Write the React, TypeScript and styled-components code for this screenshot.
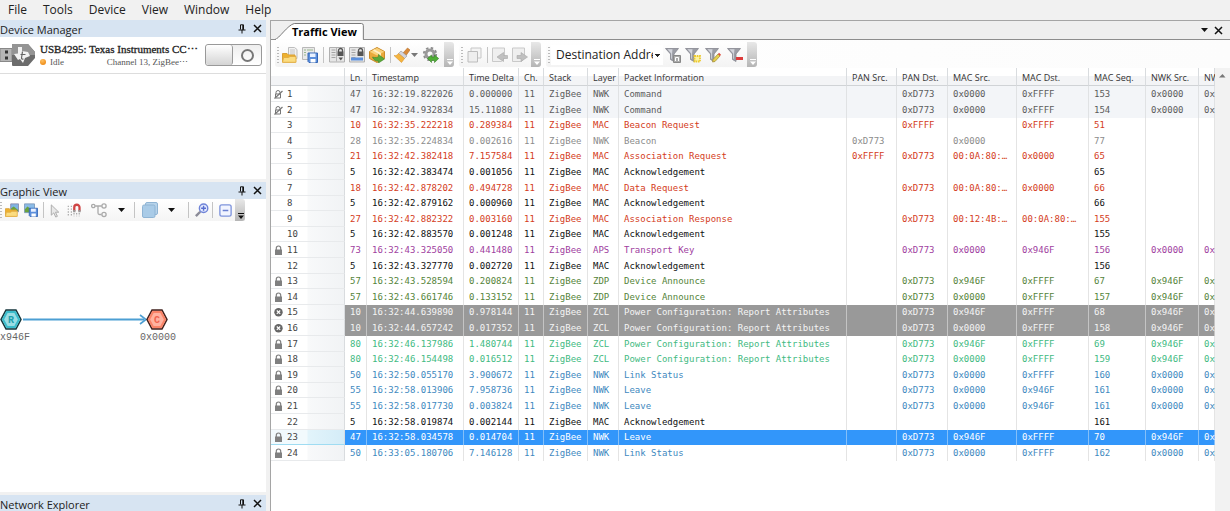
import React from 'react';
import styled, { createGlobalStyle, css } from 'styled-components';

const ui = `"Open Sans", "Noto Sans", sans-serif`;
const mono = `"DejaVu Sans Mono", monospace`;
const serif = `"Liberation Serif", serif`;

const Global = createGlobalStyle`
  * { box-sizing: border-box; }
  html, body, #root { height: 100%; }
  body { margin: 0; background: #f1f1f1; font-family: ${ui}; color: #222; }
  button { border: 0; padding: 0; background: none; font: inherit; color: inherit; }
`;

const Window = styled.div`
  display: flex;
  flex-direction: column;
  height: 100vh;
  min-height: 480px;
  overflow: hidden;
`;

const MenuBar = styled.nav`
  display: flex;
  flex: none;
  gap: 16px;
  height: 20px;
  padding-left: 8px;
`;

const MenuButton = styled.button`
  font-size: 12px;
  line-height: 18px;
`;

const Workspace = styled.div`
  display: flex;
  flex: 1;
  min-height: 0;
`;

const Sidebar = styled.aside`
  display: flex;
  flex: none;
  flex-direction: column;
  gap: 3px;
  width: 270px;
  padding-right: 4px;
`;

const Pane = styled.section<{ $grow?: string }>`
  display: flex;
  flex: ${(p) => p.$grow ?? 'none'};
  flex-direction: column;
  min-height: 0;
  overflow: hidden;
  background: #fff;
`;

const PaneHeader = styled.header`
  display: flex;
  flex: none;
  align-items: center;
  gap: 6px;
  height: 17px;
  padding-right: 3px;
  background: #d7e4f2;
`;

const PaneTitle = styled.h2`
  flex: 1;
  margin: 0;
  padding-top: 2px;
  font-size: 11px;
  font-weight: 400;
  line-height: 15px;
`;

const IconButton = styled.button<{ $w?: number }>`
  display: flex;
  flex: none;
  align-items: center;
  justify-content: center;
  width: ${(p) => p.$w ?? 16}px;
  height: 100%;
`;

const DeviceRow = styled.div`
  display: flex;
  align-items: center;
  gap: 5px;
  height: 37px;
  padding-right: 4px;
  border-bottom: 1px solid #ddd;
  font-family: ${serif};
`;

const DeviceText = styled.div`
  flex: 1;
  min-width: 0;
`;

const DeviceName = styled.div`
  font-size: 11px;
  line-height: 14px;
  white-space: nowrap;
  color: #222;
  -webkit-text-stroke: 0.3px #222;
`;

const DeviceStatus = styled.div`
  display: flex;
  align-items: center;
  gap: 4px;
  padding-right: 12px;
  font-size: 9px;
  line-height: 13px;
  color: #555;
  span { flex: 1; }
`;

const Dot = styled.i`
  width: 6px;
  height: 6px;
  border-radius: 50%;
  background: radial-gradient(circle at 40% 30%, #ffc060, #e87a00);
`;

const Toggle = styled.button`
  display: flex;
  flex: none;
  align-items: stretch;
  width: 57px;
  height: 22px;
  border: 1px solid #999;
  border-radius: 3px;
  background: linear-gradient(#eee, #fff);
`;

const ToggleKnob = styled.span`
  width: 27px;
  border-right: 1px solid #999;
  border-radius: 3px;
  background: linear-gradient(#fff, #d4d4d4);
`;

const ToggleMark = styled.span`
  width: 13px;
  height: 13px;
  margin: auto;
  border: 2px solid #777;
  border-radius: 50%;
`;

const GraphToolbar = styled.div`
  display: flex;
  flex: none;
  align-items: center;
  width: 245px;
  height: 22px;
  background: linear-gradient(#fff, #f4f4f4);
`;

const Separator = styled.i<{ $m?: number }>`
  flex: none;
  width: 1px;
  height: 16px;
  margin: 0 ${(p) => p.$m ?? 3}px;
  background: #c4c4c4;
`;

const Canvas = styled.div`
  position: relative;
  flex: 1;
`;

const GraphDrawing = styled.svg`
  position: absolute;
  left: 0;
  top: 82px;
`;

const Main = styled.main`
  display: flex;
  flex: 1;
  flex-direction: column;
  min-width: 0;
  border-top: 1px solid #a5a5a5;
  border-left: 1px solid #a5a5a5;
  background: #fff;
`;

const TabStrip = styled.div`
  display: flex;
  flex: none;
  align-items: flex-end;
  gap: 4px;
  height: 19px;
  padding-right: 6px;
  border-bottom: 1px solid #8d8d8d;
  background: #efefef;
`;

const Tab = styled.button`
  position: relative;
  height: 17px;
  margin: 0 auto -1px 4px;
  padding: 0 7px 0 17px;
  font-size: 11px;
  font-weight: 700;
  line-height: 16px;
  color: #000;
  svg { position: absolute; inset: 0; width: 100%; height: 100%; }
  span { position: relative; }
`;

const Toolbars = styled.div`
  display: flex;
  flex: none;
  gap: 5px;
  height: 28px;
  padding: 2px 0 1px 4px;
  background: linear-gradient(90deg, #fff, #fcfcfc);
`;

const ToolGroup = styled.div`
  display: flex;
  align-items: center;
  height: 25px;
  border-radius: 3px;
  background: linear-gradient(#fff, #f3f3f3);
`;

const Grip = styled.i<{ $flush?: boolean }>`
  flex: none;
  width: 2px;
  height: 16px;
  margin: 0 1px 0 ${(p) => (p.$flush ? 0 : 2)}px;
  background: repeating-linear-gradient(#bbb 0 1px, transparent 1px 3px);
`;

const Overflow = styled.button`
  display: flex;
  flex: none;
  align-items: flex-end;
  justify-content: center;
  width: 10px;
  height: 100%;
  padding-bottom: 2px;
  border-radius: 0 3px 3px 0;
  background: linear-gradient(#e8e8e8, #b5b5b5);
`;

const FieldSelect = styled.select`
  width: 112px;
  height: 20px;
  padding: 0 10px 0 5px;
  border: 0;
  appearance: none;
  overflow: hidden;
  font: 12px/20px ${ui};
  color: #222;
  background: linear-gradient(#222, #222) 104px 9px / 5px 1px no-repeat,
    linear-gradient(#222, #222) 105px 10px / 3px 1px no-repeat,
    linear-gradient(#222, #222) 106px 11px / 1px 1px no-repeat, #fff;
`;

const TableArea = styled.div`
  display: flex;
  flex: 1;
  min-height: 0;
`;

const TableClip = styled.div`
  flex: 1;
  min-width: 0;
  overflow: hidden;
`;

const ScrollBar = styled.div`
  flex: none;
  width: 15px;
  padding: 5px 4px;
  background: #f2f2f2;
  svg { display: block; }
`;

const Packets = styled.table`
  width: 100%;
  table-layout: fixed;
  border-collapse: separate;
  border-spacing: 0;
`;

const Col = styled.col<{ $w?: number }>`
  width: ${(p) => (p.$w ? `${p.$w}px` : 'auto')};
`;

const Head = styled.th`
  height: 18px;
  padding: 2px 0 0 5px;
  border-right: 1px solid #d9dcdf;
  border-bottom: 1px solid #d0d3d6;
  background: linear-gradient(#fff 50%, #f3f4f6 50%);
  font-size: 9px;
  font-weight: 400;
  line-height: 15px;
  text-align: left;
  white-space: nowrap;
  color: #333;
`;

type Tone = 'plain' | 'red' | 'dim' | 'black' | 'purple' | 'olive' | 'error' | 'green' | 'blue' | 'selected';

const tones: Record<Tone, { fg: string; bg: string; line: string }> = {
  plain: { fg: '#5c5c5c', bg: '#f3f5f8', line: '#e0e2e4' },
  red: { fg: '#d43c22', bg: '#fff', line: '#e4e4e4' },
  dim: { fg: '#8c8c8c', bg: '#fff', line: '#e4e4e4' },
  black: { fg: '#111', bg: '#fff', line: '#e4e4e4' },
  purple: { fg: '#a040a0', bg: '#fff', line: '#e4e4e4' },
  olive: { fg: '#55843a', bg: '#fff', line: '#e4e4e4' },
  error: { fg: '#f4f4f4', bg: '#999', line: '#c4c4c4' },
  green: { fg: '#42ba82', bg: '#fff', line: '#e4e4e4' },
  blue: { fg: '#4189c0', bg: '#fff', line: '#e4e4e4' },
  selected: { fg: '#fff', bg: '#3296fa', line: '#84bff8' },
};

const Row = styled.tr<{ $tone: Tone }>`
  height: 16px;
  &:nth-child(5n + 3), &:nth-child(5n + 5) { height: 15px; }
  td {
    border-right: 1px solid ${(p) => tones[p.$tone].line};
    background: ${(p) => tones[p.$tone].bg};
    color: ${(p) => tones[p.$tone].fg};
  }
`;

const Cell = styled.td`
  padding: 0 0 0 5px;
  font-family: ${mono};
  font-size: 9px;
  line-height: 15px;
  white-space: nowrap;
`;

const RowHead = styled.th<{ $selected: boolean }>`
  padding: 0;
  border-right: 1px solid #d9dcdf;
  border-bottom: 1px solid ${(p) => (p.$selected ? '#9fdcf2' : '#e8eaec')};
  font-family: ${mono};
  font-size: 9px;
  font-weight: 400;
  line-height: 14px;
  text-align: left;
  color: #444;
  background: linear-gradient(90deg, #fff 36px, #f8f9fa 37px, #f1f3f5);
  ${(p) =>
    p.$selected &&
    css`
      background: linear-gradient(90deg, #f2fafd 36px, #e2f4fb 37px, #d4ecf7);
    `}
`;

const RowMark = styled.span`
  display: flex;
  align-items: center;
  gap: 4px;
  padding-left: 3px;
  svg { flex: none; width: 9px; height: 10px; }
`;

const Caret = ({ color = '#111' }: { color?: string }) => (
  <svg width="7" height="4" viewBox="0 0 7 4"><path d="M0 0h7L3.5 4z" fill={color} /></svg>
);

const Pin = () => (
  <svg width="8" height="10" viewBox="0 0 8 10" fill="none" stroke="#111">
    <path d="M2.5 5.500V.8h3v4.700M.5 6h7M4 6v3.500" /><path d="M5 1v5" strokeWidth="1.4" />
  </svg>
);

const Cross = () => (
  <svg width="9" height="9" viewBox="0 0 9 9"><path d="M1 1l7 7M8 1L1 8" stroke="#111" strokeWidth="1.5" /></svg>
);

const OverflowMark = ({ color = '#fff' }: { color?: string }) => (
  <svg width="7" height="6" viewBox="0 0 7 6"><path d="M1 0h6v1H1zM1 2.5h6L4 6z" fill={color} /></svg>
);

type IconName =
  | 'open' | 'save' | 'openImage' | 'saveImage' | 'lockList' | 'lockScreen' | 'box' | 'brush' | 'gear' | 'copy'
  | 'back' | 'forward' | 'funnel' | 'funnelNew' | 'funnelEdit' | 'funnelRemove' | 'pointer' | 'magnet'
  | 'tree' | 'layers' | 'zoom' | 'collapse';

const folder = (
  <>
    <path d="M.5 15V6.500h4.500l1.500 1.500h6.500v7z" fill="#eeb12e" stroke="#d9a136" />
    <path d="M.5 15.300l1-4.800h5l1.500-1h6v5.800z" fill="#fbdc80" stroke="#e3ae45" />
  </>
);
const floppy = (
  <>
    <path d="M6 6h9.500v9.500H7l-1-1z" fill="#5c8fdc" stroke="#3566b4" />
    <path d="M8 6.500h5.500v3.500H8z" fill="#e9f1ff" />
    <path d="M8.500 12h5v3.500h-5z" fill="#fff" />
  </>
);
const funnel = (
  <>
    <path d="M.5 1.500h13L9 7v7.500L5.500 12.500V7z" fill="#9c9ea6" stroke="#85878f" strokeWidth=".8" />
    <path d="M2.500 2.200h5L7 7v5l-.8-.5v-5z" fill="#d4d6dd" />
  </>
);
const listPage = (
  <>
    <path d="M.5 .5h15v14.500H.5z" fill="#e6e6e6" stroke="#b0b0b0" />
    <path d="M2.500 3h4M2.500 5.500h4M2.500 8h4M2.500 10.500h4" stroke="#a4a4a4" />
  </>
);
const padlock = (
  <>
    <path d="M9.500 5V3.500a2 2 0 0 1 4 0V5" fill="none" stroke="#555" strokeWidth="1.300" />
    <path d="M8.500 4.500h6v4.500h-6z" fill="#555" />
  </>
);

const drawings: Record<IconName, React.ReactNode> = {
  open: (<><path d="M6.500 .5h6l2.500 2v9H6.500z" fill="#f2f2f2" stroke="#bdbdbd" /><path d="M8 3h5M8 5h5M8 7h5" stroke="#c4c4c4" />{folder}</>),
  save: (<><path d="M.5 .5h12v12H.5z" fill="#e9e9e9" stroke="#b8b8b8" /><path d="M2 3h2M5 3h6M2 5.500h2M2 8h2" stroke="#9ab890" />{floppy}</>),
  openImage: (<><path d="M6.500 1h9v9h-9z" fill="#7fb4e4" stroke="#88a" /><path d="M7 9.500V6l3-2 5 4v1.500z" fill="#6ba23c" />{folder}</>),
  saveImage: (<><path d="M.5 1h11.500v10H.5z" fill="#8bbce8" stroke="#7d99b8" /><path d="M1 10.500V7l3-3 4 3v3.500z" fill="#6ba23c" />{floppy}</>),
  lockList: (<>{listPage}<path d="M7.500 1v13.500" stroke="#b5b5b5" />{padlock}<path d="M9.500 10.500h4.500l-2.200 3z" fill="#555" /></>),
  lockScreen: (<>{listPage}{padlock}<path d="M2 10.500h12v3H2z" fill="#5d91dd" /></>),
  box: (
    <>
      <path d="M.5 4.500L8 .5l7.500 4v7L8 15.500l-7.500-4z" fill="#e9a93b" stroke="#c98a28" />
      <path d="M.8 4.700L8 1l7.200 3.700L8 8.500z" fill="#f9d27b" />
      <path d="M4.500 3l6.500 3.500v2.500" fill="none" stroke="#fff1c9" strokeWidth="1.800" />
      <path d="M3.500 10c3 1 5 .5 6-.5V7.500l6 4.500-6 4v-2c-2.500 .5-5-1-6-4z" fill="#5aa93a" stroke="#3f8a28" strokeWidth=".6" />
    </>
  ),
  brush: (
    <>
      <path d="M9 6l4.500-5L16 3l-4 5.500z" fill="#d98a3a" stroke="#b46f2a" strokeWidth=".6" />
      <path d="M7 4l6 5-2.500 2.500-6-5z" fill="#d4d4dc" stroke="#999" strokeWidth=".6" />
      <path d="M4.500 6.500l6 5L7.500 15.500 0 8.500c2 .5 3.500-.5 4.500-2z" fill="#f5b53f" stroke="#d9922a" strokeWidth=".6" />
    </>
  ),
  gear: (
    <>
      <circle cx="7" cy="7" r="4" fill="none" stroke="#9a9a9a" strokeWidth="3" />
      <circle cx="7" cy="7" r="6.200" fill="none" stroke="#8d8d8d" strokeWidth="1.800" strokeDasharray="2.500 2.370" />
      <path d="M4.500 11.500L8.500 8v2h3V8l4.200 3.500-4.200 4v-2h-3v2z" fill="#4fae36" stroke="#368024" strokeWidth=".6" />
    </>
  ),
  copy: (<><path d="M5 1h10v10H5z" fill="#f4f4f4" stroke="#c6c6c6" /><path d="M2 4.500h9.500V15H2z" fill="#eee" stroke="#bcbcbc" /></>),
  back: (<><path d="M.5 1h12v10l-3 3.500h-9z" fill="#efefef" stroke="#c9c9c9" /><path d="M15.500 8.500h-4v-3L5 10l6.500 4.500v-3h4z" fill="#c0c0c0" stroke="#a8a8a8" strokeWidth=".6" /></>),
  forward: (<><path d="M.5 1h12v10l-3 3.500h-9z" fill="#efefef" stroke="#c9c9c9" /><path d="M5 8.500h4v-3l6.500 4.500L9 14.500v-3H5z" fill="#c0c0c0" stroke="#a8a8a8" strokeWidth=".6" /></>),
  funnel: (<>{funnel}<path d="M8.500 8.500h7v7h-7z" fill="#aaa" stroke="#888" /><path d="M10.500 14v-3.500h3V14" fill="none" stroke="#fff" /></>),
  funnelNew: (<>{funnel}<path d="M9.500 9h5.500v5.500H9.500z" fill="#fdf3a0" stroke="#ecc92f" strokeWidth="1.800" strokeDasharray="1.600 .7" /></>),
  funnelEdit: (<>{funnel}<path d="M7.500 15l.5-2.500L13 7l2 2-5 5.500z" fill="#e5d050" stroke="#a08a30" strokeWidth=".7" /><path d="M13 7l2 2 1-1.200-2-2z" fill="#e04a3a" /></>),
  funnelRemove: (<>{funnel}<path d="M9 10h7v3H9z" fill="#dd3b3b" /></>),
  pointer: <path d="M3.500 2v11l2.700-2.500 2 4.500 1.800-.8-2-4.400h3.500z" fill="#e8e8e8" stroke="#aaa" />,
  magnet: (
    <>
      <path d="M1.500 3v12M5 3v12M8 11.500V15M11 11.500V15M14 11.500V15" stroke="#aaa" strokeWidth="1.400" strokeDasharray="1.600 1.600" />
      <path d="M8.300 9.500V5a3 3 0 0 1 6 0v4.500" fill="none" stroke="#cf4545" strokeWidth="2.600" />
      <path d="M7 8h2.600v2.500H7zM13 8h2.600v2.500H13z" fill="#999" />
    </>
  ),
  tree: (
    <g fill="none" stroke="#aaa" strokeWidth="1.300">
      <circle cx="2.300" cy="4" r="1.700" /><circle cx="13" cy="4" r="2.100" /><circle cx="13" cy="12.500" r="2.100" />
      <path d="M4.200 4h6.500M7 4v7q0 1.500 1.500 1.500h2" />
    </g>
  ),
  layers: (<><rect x="3.500" y=".5" width="12" height="12" rx="1.500" fill="#b7d3ea" stroke="#8fb4d4" /><rect x=".5" y="3" width="12.500" height="12.500" rx="1.500" fill="#a9cbe7" stroke="#8fb4d4" /></>),
  zoom: (
    <>
      <path d="M1 15L6 10" stroke="#8b8b98" strokeWidth="2.800" />
      <circle cx="9.800" cy="6" r="4.800" fill="#e4ebff" stroke="#7084d8" strokeWidth="1.600" />
      <path d="M7 6h5.600M9.800 3.200v5.600" stroke="#5a6fd0" strokeWidth="1.600" />
    </>
  ),
  collapse: (<><rect x="2" y="2" width="12" height="12" rx="2" fill="#f1f4ff" stroke="#7d93dc" strokeWidth="1.400" /><path d="M5 8h6" stroke="#6a80d0" strokeWidth="1.600" /></>),
};

const Icon = ({ name, size = 16 }: { name: IconName; size?: number }) => (
  <svg width={size} height={size} viewBox="0 0 16 16" fill="none">{drawings[name]}</svg>
);

const Tool = ({ name, label, w = 20, size }: { name: IconName; label: string; w?: number; size?: number }) => (
  <IconButton $w={w} aria-label={label}><Icon name={name} size={size} /></IconButton>
);

const UsbStick = () => (
  <svg width="35" height="24" viewBox="0 0 35 24">
    <path d="M0 5.500h12v13H0z" fill="#b5b5b5" stroke="#888" />
    <path d="M5 7.500h3v3H5zM5 13.500h3v3H5z" fill="#333" />
    <path d="M12 2q0-1 1-1h15l7 8v6l-7 8H13q-1 0-1-1z" fill="#6c6c6c" />
    <path d="M12 2q0-1 1-1h15l7 8v3H12z" fill="#949494" />
    <path d="M18 4h4v4l6 1 2 4-5 2-2 5-3-4-2 1-4-6 4-.500z" fill="#f2f2f2" />
    <path d="M22.500 8.500l-1 6.500q0 1.500 2 1M20.500 11.500h5" stroke="#666" fill="none" strokeWidth="1.200" />
  </svg>
);

const PaneHead = ({ title }: { title: string }) => (
  <PaneHeader>
    <PaneTitle>{title}</PaneTitle>
    <IconButton $w={8} aria-label={`Pin ${title}`}><Pin /></IconButton>
    <IconButton $w={11} aria-label={`Close ${title}`}><Cross /></IconButton>
  </PaneHeader>
);

type Mark = 'none' | 'open' | 'lock' | 'error';

const MarkIcon = ({ mark }: { mark: Mark }) => (
  <svg viewBox="0 0 9 10">
    {mark === 'lock' && (<><path d="M2.300 5V3.200a2.200 2.200 0 0 1 4.400 0V5" fill="none" stroke="#808080" strokeWidth="1.200" /><path d="M1 4.500h7V10H1z" fill="#808080" /></>)}
    {mark === 'open' && (<g fill="none" stroke="#777"><path d="M2 5V3.500a2 2 0 0 1 4 0V5M1.500 5h5v4h-5z" /><path d="M.5 9.500L8.500 2" strokeWidth="1.200" /></g>)}
    {mark === 'error' && (<><circle cx="4.500" cy="5.200" r="4.200" fill="#666" /><path d="M2.800 3.500l3.400 3.400M6.200 3.500L2.800 6.900" stroke="#fff" strokeWidth="1.200" /></>)}
  </svg>
);

const columns: [string, number?][] = [
  ['', 74], ['Ln.', 22], ['Timestamp', 97], ['Time Delta', 55], ['Ch.', 25], ['Stack', 44], ['Layer', 31],
  ['Packet Information', 228], ['PAN Src.', 50], ['PAN Dst.', 51], ['MAC Src.', 69], ['MAC Dst.', 72],
  ['MAC Seq.', 57], ['NWK Src.', 53], ['NWK Dst.'],
];

const source = `
plain|open|47|19.822026|0.000000|NWK|Command||0xD773|0x0000|0xFFFF|153|0x0000|0xFFFF
plain|open|47|34.932834|15.11080|NWK|Command||0xD773|0x0000|0xFFFF|154|0x0000|0xFFFF
red|none|10|35.222218|0.289384|MAC|Beacon Request||0xFFFF||0xFFFF|51||
dim|none|28|35.224834|0.002616|NWK|Beacon|0xD773||0x0000||77||
red|none|21|42.382418|7.157584|MAC|Association Request|0xFFFF|0xD773|00:0A:80:…|0x0000|65||
black|none|5|42.383474|0.001056|MAC|Acknowledgement|||||65||
red|none|18|42.878202|0.494728|MAC|Data Request||0xD773|00:0A:80:…|0x0000|66||
black|none|5|42.879162|0.000960|MAC|Acknowledgement|||||66||
red|none|27|42.882322|0.003160|MAC|Association Response||0xD773|00:12:4B:…|00:0A:80:…|155||
black|none|5|42.883570|0.001248|MAC|Acknowledgement|||||155||
purple|lock|73|43.325050|0.441480|APS|Transport Key||0xD773|0x0000|0x946F|156|0x0000|0x946F
black|none|5|43.327770|0.002720|MAC|Acknowledgement|||||156||
olive|lock|57|43.528594|0.200824|ZDP|Device Announce||0xD773|0x946F|0xFFFF|67|0x946F|0xFFFF
olive|lock|57|43.661746|0.133152|ZDP|Device Announce||0xD773|0x0000|0xFFFF|157|0x946F|0xFFFF
error|error|10|44.639890|0.978144|ZCL|Power Configuration: Report Attributes||0xD773|0x946F|0xFFFF|68|0x946F|0xFFFF
error|error|10|44.657242|0.017352|ZCL|Power Configuration: Report Attributes||0xD773|0x0000|0xFFFF|158|0x946F|0xFFFF
green|lock|80|46.137986|1.480744|ZCL|Power Configuration: Report Attributes||0xD773|0x946F|0xFFFF|69|0x946F|0xFFFF
green|lock|80|46.154498|0.016512|ZCL|Power Configuration: Report Attributes||0xD773|0x0000|0xFFFF|159|0x946F|0xFFFF
blue|lock|50|50.055170|3.900672|NWK|Link Status||0xD773|0x0000|0xFFFF|160|0x0000|0xFFFF
blue|lock|55|58.013906|7.958736|NWK|Leave||0xD773|0x0000|0x946F|161|0x0000|0x946F
blue|lock|55|58.017730|0.003824|NWK|Leave||0xD773|0x0000|0x946F|161|0x0000|0x946F
black|none|5|58.019874|0.002144|MAC|Acknowledgement|||||161||
selected|lock|47|58.034578|0.014704|NWK|Leave||0xD773|0x946F|0xFFFF|70|0x946F|0xFFFF
blue|lock|50|33:05.180706|7.146128|NWK|Link Status||0xD773|0x0000|0xFFFF|162|0x0000|0xFFFF
`;

const packets = source.trim().split('\n').map((line) => {
  const [tone, mark, length, time, delta, layer, ...rest] = line.split('|');
  const stamp = time.includes(':') ? `16:${time}` : `16:32:${time}`;
  return { tone: tone as Tone, mark: mark as Mark, cells: [length, stamp, delta, '11', 'ZigBee', layer, ...rest] };
});

export default function App() {
  return (
    <Window>
      <Global />
      <MenuBar>
        {['File', 'Tools', 'Device', 'View', 'Window', 'Help'].map((m) => <MenuButton key={m}>{m}</MenuButton>)}
      </MenuBar>
      <Workspace>
        <Sidebar>
          <Pane $grow="0 0 159px">
            <PaneHead title="Device Manager" />
            <DeviceRow>
              <UsbStick />
              <DeviceText>
                <DeviceName>USB4295: Texas Instruments CC⋯</DeviceName>
                <DeviceStatus><Dot /><span>Idle</span>Channel 13, ZigBee⋯</DeviceStatus>
              </DeviceText>
              <Toggle aria-label="Capture"><ToggleKnob /><ToggleMark /></Toggle>
            </DeviceRow>
          </Pane>
          <Pane $grow="1">
            <PaneHead title="Graphic View" />
            <GraphToolbar>
              <Grip $flush />
              <Tool name="openImage" label="Open image" w={18} size={14} />
              <Tool name="saveImage" label="Save image" size={14} />
              <Separator $m={2} />
              <Tool name="pointer" label="Select" w={18} size={15} />
              <Tool name="magnet" label="Snap to grid" size={14} />
              <Tool name="tree" label="Tree layout" w={30} />
              <IconButton $w={14} aria-label="Layouts"><Caret /></IconButton>
              <Separator $m={6} />
              <Tool name="layers" label="Layers" w={18} />
              <IconButton $w={24} aria-label="Layer options"><Caret /></IconButton>
              <Separator $m={5} />
              <Tool name="zoom" label="Zoom" w={16} size={14} />
              <Separator $m={2} />
              <Tool name="collapse" label="Collapse" size={15} />
              <Overflow aria-label="More graph tools"><OverflowMark color="#111" /></Overflow>
            </GraphToolbar>
            <Canvas>
              <GraphDrawing width="265" height="44" viewBox="0 0 265 44">
                <path d="M23 16.500h121" stroke="#4d9fd3" strokeWidth="1.800" />
                <path d="M140 12l6 4.500-6 4.500" fill="none" stroke="#4d9fd3" strokeWidth="1.600" />
                <path d="M6 7h10l5 9.500L16 26H6L1 16.500z" fill="#9bdde4" stroke="#16363c" strokeWidth="1.500" />
                <path d="M7 9h8l4 7.500-4 7.500H7l-4-7.500z" fill="none" stroke="#3bbccb" strokeWidth="2" />
                <path d="M152 7h10l5 9.500-5 9.500h-10l-5-9.500z" fill="#ffb3a0" stroke="#40201c" strokeWidth="1.500" />
                <path d="M153 9h8l4 7.500-4 7.500h-8l-4-7.500z" fill="none" stroke="#f98468" strokeWidth="2" />
                <g fontFamily="Liberation Mono, monospace" fontSize="10" textAnchor="middle">
                  <text x="11" y="20" fill="#1ca0ae" fontWeight="700">R</text>
                  <text x="157" y="20" fill="#f0644e" fontWeight="700">C</text>
                  <text x="12" y="37" fill="#666">0x946F</text>
                  <text x="158" y="37" fill="#666">0x0000</text>
                </g>
              </GraphDrawing>
            </Canvas>
          </Pane>
          <Pane $grow="0 0 16px">
            <PaneHead title="Network Explorer" />
          </Pane>
        </Sidebar>
        <Main>
          <TabStrip>
            <Tab>
              <svg viewBox="0 0 92 17" preserveAspectRatio="none">
                <path d="M0 16.500C4 16 13 2 20 .5h69.500q2 0 2 2v14" fill="#fff" stroke="#777" />
                <path d="M1 16.500h90" stroke="#fff" />
              </svg>
              <span>Traffic View</span>
            </Tab>
            <IconButton $w={9} aria-label="Tab list"><Caret /></IconButton>
            <IconButton $w={11} aria-label="Close tab"><Cross /></IconButton>
          </TabStrip>
          <Toolbars>
            <ToolGroup>
              <Grip />
              <Tool name="open" label="Open" />
              <Tool name="save" label="Save" />
              <Separator />
              <Tool name="lockList" label="Lock scroll" />
              <Tool name="lockScreen" label="Lock selection" />
              <Tool name="box" label="Export" />
              <Separator />
              <Tool name="brush" label="Colors" w={16} />
              <IconButton $w={8} aria-label="Color options"><Caret color="#777" /></IconButton>
              <Tool name="gear" label="Settings" w={26} />
              <Overflow aria-label="More capture tools"><OverflowMark /></Overflow>
            </ToolGroup>
            <ToolGroup>
              <Grip />
              <Tool name="copy" label="Copy" />
              <Separator />
              <Tool name="back" label="Previous" w={18} />
              <Tool name="forward" label="Next" w={22} />
              <Overflow aria-label="More navigation tools"><OverflowMark /></Overflow>
            </ToolGroup>
            <ToolGroup>
              <Grip />
              <FieldSelect aria-label="Filter field" defaultValue="dst"><option value="dst">Destination Address</option></FieldSelect>
              <Tool name="funnel" label="Apply filter" />
              <Tool name="funnelNew" label="New filter" />
              <Tool name="funnelEdit" label="Edit filter" />
              <Tool name="funnelRemove" label="Remove filter" w={24} />
              <Overflow aria-label="More filter tools"><OverflowMark /></Overflow>
            </ToolGroup>
          </Toolbars>
          <TableArea>
            <TableClip>
              <Packets>
                <colgroup>{columns.map(([name, w], i) => <Col key={name + i} $w={w} />)}</colgroup>
                <thead>
                  <tr>{columns.map(([name], i) => <Head key={name + i} scope="col">{name}</Head>)}</tr>
                </thead>
                <tbody>
                  {packets.map((p, i) => (
                    <Row key={i} $tone={p.tone}>
                      <RowHead scope="row" $selected={p.tone === 'selected'}>
                        <RowMark><MarkIcon mark={p.mark} />{i + 1}</RowMark>
                      </RowHead>
                      {p.cells.map((c, j) => <Cell key={j}>{c}</Cell>)}
                    </Row>
                  ))}
                </tbody>
              </Packets>
            </TableClip>
            <ScrollBar><svg width="7" height="5" viewBox="0 0 7 5"><path d="M0 4.500h6.500L3.500 1z" fill="#777" /></svg></ScrollBar>
          </TableArea>
        </Main>
      </Workspace>
    </Window>
  );
}
